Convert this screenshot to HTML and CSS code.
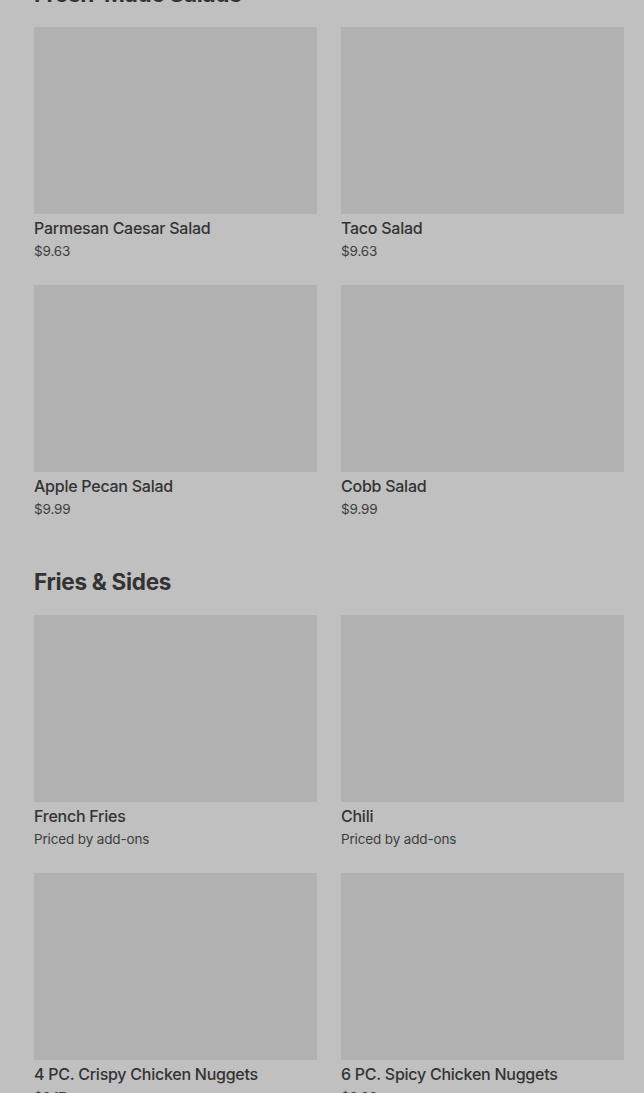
FILE: index.html
```html
<!DOCTYPE html>
<html>
<head>
<meta charset="utf-8">
<link rel="stylesheet" href="styles.css">
</head>
<body>
<div class="page">
  <section class="section">
    <h2 class="heading">Fresh-Made Salads</h2>
    <div class="grid">
      <div class="card"><div class="thumb"></div><div class="name">Parmesan Caesar Salad</div><div class="price">$9.63</div></div>
      <div class="card"><div class="thumb"></div><div class="name">Taco Salad</div><div class="price">$9.63</div></div>
      <div class="card"><div class="thumb"></div><div class="name">Apple Pecan Salad</div><div class="price">$9.99</div></div>
      <div class="card"><div class="thumb"></div><div class="name">Cobb Salad</div><div class="price">$9.99</div></div>
    </div>
  </section>
  <section class="section">
    <h2 class="heading">Fries &amp; Sides</h2>
    <div class="grid">
      <div class="card"><div class="thumb"></div><div class="name">French Fries</div><div class="price">Priced by add-ons</div></div>
      <div class="card"><div class="thumb"></div><div class="name">Chili</div><div class="price">Priced by add-ons</div></div>
      <div class="card"><div class="thumb"></div><div class="name">4 PC. Crispy Chicken Nuggets</div><div class="price">$2.17</div></div>
      <div class="card"><div class="thumb"></div><div class="name">6 PC. Spicy Chicken Nuggets</div><div class="price">$3.09</div></div>
    </div>
  </section>
</div>
</body>
</html>
```

FILE: styles.css
```css
html, body {
  margin: 0;
  padding: 0;
  background: #c0c0c0;
  overflow: hidden;
}
body {
  font-family: Inter, "Noto Sans", sans-serif;
  color: #333333;
}
.page {
  margin-top: -22px;
  padding: 0 20px 0 34px;
  display: flex;
  flex-direction: column;
  gap: 48px;
}
.heading {
  margin: 0 0 17px 0;
  font-size: 22.5px;
  line-height: 32px;
  font-weight: 700;
  letter-spacing: -0.3px;
  color: #333333;
}
.grid {
  display: grid;
  grid-template-columns: 283px 283px;
  column-gap: 24px;
  row-gap: 25px;
}
.card {
  display: flex;
  flex-direction: column;
}
.thumb {
  height: 187px;
  background: #b1b1b1;
  margin-bottom: 4px;
}
.name {
  font-size: 16px;
  line-height: 20px;
  font-weight: 500;
  letter-spacing: -0.25px;
  color: #333333;
  margin-bottom: 4px;
}
.price {
  font-size: 13.5px;
  line-height: 18px;
  color: #3d3d3d;
  letter-spacing: -0.15px;
}
```
